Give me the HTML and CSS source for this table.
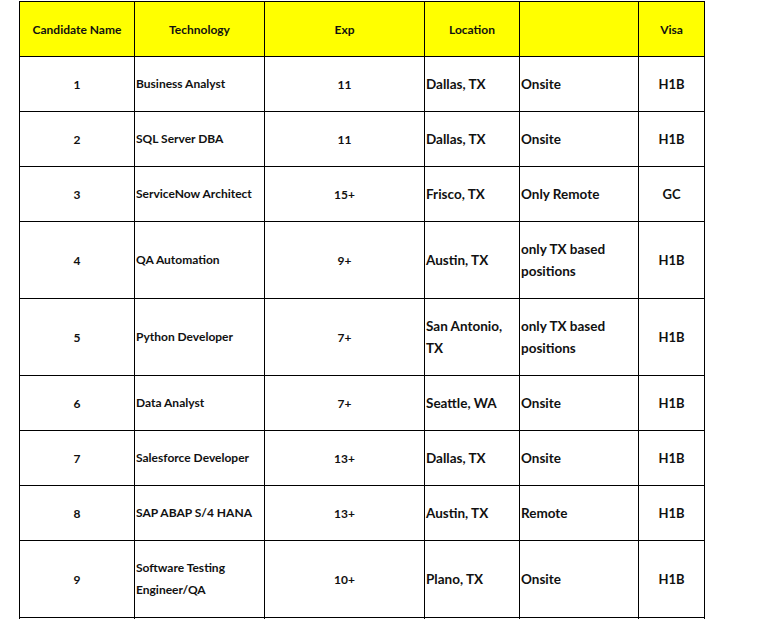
FILE: index.html
```html
<!DOCTYPE html>
<html>
<head>
<meta charset="utf-8">
<link rel="stylesheet" href="styles.css">
</head>
<body>
<table class="grid">
  <colgroup>
    <col class="c1"><col class="c2"><col class="c3"><col class="c4"><col class="c5"><col class="c6">
  </colgroup>
  <thead>
    <tr class="head">
      <th>Candidate Name</th>
      <th>Technology</th>
      <th>Exp</th>
      <th>Location</th>
      <th></th>
      <th>Visa</th>
    </tr>
  </thead>
  <tbody>
    <tr class="r1"><td class="num">1</td><td class="tech">Business Analyst</td><td class="num">11</td><td class="loc">Dallas, TX</td><td class="loc">Onsite</td><td class="visa">H1B</td></tr>
    <tr class="r1"><td class="num">2</td><td class="tech">SQL Server DBA</td><td class="num">11</td><td class="loc">Dallas, TX</td><td class="loc">Onsite</td><td class="visa">H1B</td></tr>
    <tr class="r1"><td class="num">3</td><td class="tech">ServiceNow Architect</td><td class="num">15+</td><td class="loc">Frisco, TX</td><td class="loc">Only Remote</td><td class="visa">GC</td></tr>
    <tr class="r2"><td class="num">4</td><td class="tech">QA Automation</td><td class="num">9+</td><td class="loc">Austin, TX</td><td class="loc">only TX based positions</td><td class="visa">H1B</td></tr>
    <tr class="r2"><td class="num">5</td><td class="tech">Python Developer</td><td class="num">7+</td><td class="loc">San Antonio, TX</td><td class="loc">only TX based positions</td><td class="visa">H1B</td></tr>
    <tr class="r1"><td class="num">6</td><td class="tech">Data Analyst</td><td class="num">7+</td><td class="loc">Seattle, WA</td><td class="loc">Onsite</td><td class="visa">H1B</td></tr>
    <tr class="r1"><td class="num">7</td><td class="tech">Salesforce Developer</td><td class="num">13+</td><td class="loc">Dallas, TX</td><td class="loc">Onsite</td><td class="visa">H1B</td></tr>
    <tr class="r1"><td class="num">8</td><td class="tech">SAP ABAP S/4 HANA</td><td class="num">13+</td><td class="loc">Austin, TX</td><td class="loc">Remote</td><td class="visa">H1B</td></tr>
    <tr class="r2"><td class="num">9</td><td class="tech">Software Testing Engineer/QA</td><td class="num">10+</td><td class="loc">Plano, TX</td><td class="loc">Onsite</td><td class="visa">H1B</td></tr>
    <tr class="r1"><td class="num"></td><td class="tech"></td><td class="num"></td><td class="loc"></td><td class="loc"></td><td class="visa"></td></tr>
  </tbody>
</table>
</body>
</html>
```
FILE: styles.css
```css
html, body {
  margin: 0;
  padding: 0;
  background: #ffffff;
}
body {
  padding: 1px 0 0 19px;
  font-family: Lato, "Open Sans", "Liberation Sans", sans-serif;
  font-weight: 700;
  color: #111111;
}
.grid {
  border-collapse: collapse;
  table-layout: fixed;
  width: 685px;
}
.c1 { width: 115px; }
.c2 { width: 130px; }
.c3 { width: 160px; }
.c4 { width: 95px; }
.c5 { width: 119px; }
.c6 { width: 66px; }
.grid th, .grid td {
  border: 1px solid #000;
  padding: 0 1px;
  vertical-align: middle;
  overflow: hidden;
}
.head th {
  height: 54px;
  background: #ffff00;
  font-size: 12px;
  font-weight: 700;
  text-align: center;
}
.r1 td { height: 54px; }
.r2 td { height: 76px; }
.num {
  font-size: 12px;
  text-align: center;
}
.tech {
  font-size: 12px;
  text-align: left;
  line-height: 22px;
}
.loc {
  font-size: 13.5px;
  text-align: left;
  line-height: 22px;
}
.visa {
  font-size: 13px;
  text-align: center;
}
```
